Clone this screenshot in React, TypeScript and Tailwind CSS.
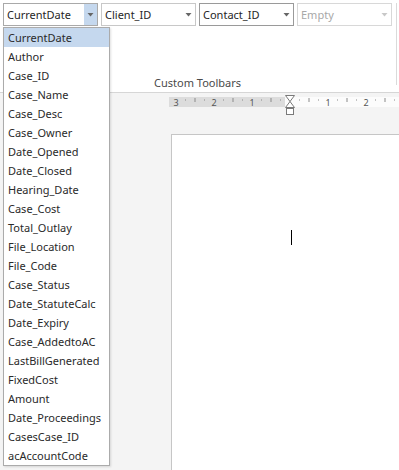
import React from 'react';

const fields = [
  'CurrentDate',
  'Author',
  'Case_ID',
  'Case_Name',
  'Case_Desc',
  'Case_Owner',
  'Date_Opened',
  'Date_Closed',
  'Hearing_Date',
  'Case_Cost',
  'Total_Outlay',
  'File_Location',
  'File_Code',
  'Case_Status',
  'Date_StatuteCalc',
  'Date_Expiry',
  'Case_AddedtoAC',
  'LastBillGenerated',
  'FixedCost',
  'Amount',
  'Date_Proceedings',
  'CasesCase_ID',
  'acAccountCode',
];

function Arrow({ color = '#555' }: { color?: string }) {
  return (
    <svg width="7" height="4" viewBox="0 0 7 4">
      <path d="M0.5 0h6L3.5 3.5z" fill={color} />
    </svg>
  );
}

function Combo({
  label,
  active,
  disabled,
  border,
}: {
  label: string;
  active?: boolean;
  disabled?: boolean;
  border: string;
}) {
  return (
    <div
      className="flex h-[23px] w-[95px] items-stretch border bg-white"
      style={{ borderColor: border }}
    >
      <span
        className={
          'flex-1 truncate pl-[3px] text-[11px] leading-[21px] ' +
          (disabled ? 'text-[#a8a8a8]' : 'text-[#262626]')
        }
      >
        {label}
      </span>
      <span
        className={
          'flex w-[13px] items-center justify-center ' + (active ? 'bg-[#c5d8ee]' : '')
        }
      >
        <Arrow color={disabled ? '#c8c8c8' : '#666'} />
      </span>
    </div>
  );
}

function Ruler() {
  const zero = 290;
  const unit = 38;
  const ticks: React.ReactNode[] = [];
  for (let u = -3; u <= 3; u++) {
    for (let q = 1; q < 4; q++) {
      const x = zero + u * unit + (q * unit) / 4 - 169;
      if (x < 0 || x > 230) continue;
      if (Math.abs(x - (zero - 169)) < 2) continue;
      ticks.push(
        q === 2 ? (
          <line key={`${u}-${q}`} x1={x} x2={x} y1={3} y2={7} stroke="#8a8a8a" />
        ) : (
          <rect key={`${u}-${q}`} x={x - 0.5} y={4.5} width={1} height={1} fill="#8a8a8a" />
        ),
      );
    }
  }
  const nums = [-3, -2, -1, 1, 2];
  return (
    <div className="relative ml-[169px] h-[18px] w-[230px]">
      <svg width="230" height="22" className="absolute left-0 top-[-2px]">
        <rect x="0" y="2" width="116" height="10" fill="#dcdcdc" />
        <rect x="116" y="2" width="114" height="10" fill="#fcfcfc" />
        {ticks}
        {nums.map((n) => (
          <text
            key={n}
            x={zero + n * unit - 169}
            y={10.5}
            textAnchor="middle"
            fontSize="9"
            fill="#555"
            fontFamily="'Noto Sans', sans-serif"
          >
            {Math.abs(n)}
          </text>
        ))}
        <path d="M116.5 0.5h9l-4.5 6z M116.5 12.5h9l-4.5 -6z" fill="#fff" stroke="#7a7a7a" />
        <rect x="117.5" y="13.5" width="7" height="6" fill="#fff" stroke="#7a7a7a" />
      </svg>
    </div>
  );
}

export default function App() {
  return (
    <div
      className="relative h-[470px] w-[399px] overflow-hidden bg-white"
      style={{ fontFamily: "'Noto Sans', 'Open Sans', sans-serif" }}
    >
      {/* Ribbon group */}
      <div className="flex h-[93px] flex-col border-b border-[#d6d6d6] bg-white">
        <div className="flex flex-1">
          <div className="flex flex-1 flex-col">
            <div className="flex gap-[3px] pl-[3px] pt-[3px]">
              <Combo label="CurrentDate" active border="#a9a9a9" />
              <Combo label="Client_ID" border="#c8c8c8" />
              <Combo label="Contact_ID" border="#9a9a9a" />
              <Combo label="Empty" disabled border="#d8d8d8" />
            </div>
            <div className="mt-auto pb-[1px] pl-[154px] text-[11px] leading-[16px] text-[#4a4a4a]">
              Custom Toolbars
            </div>
          </div>
          <div className="mr-[2px] mt-[3px] mb-[7px] w-px bg-[#dadada]" />
        </div>
      </div>

      {/* Document area */}
      <div className="flex h-[377px] flex-col bg-[#f4f4f4] pt-[4px]">
        <Ruler />
        <div className="ml-[171px] mt-[19px] flex-1 border-l border-t border-[#c6c6c6] bg-white">
          <div className="ml-[119px] mt-[95px] h-[15px] w-px bg-black" />
        </div>
      </div>

      {/* Open dropdown list */}
      <div className="absolute left-[3px] top-[27px] w-[107px] border border-[#ababab] bg-white shadow-[1px_1px_2px_rgba(0,0,0,0.12)]">
        {fields.map((f, i) => (
          <div
            key={f}
            className={
              'h-[19px] pl-[4px] text-[11px] leading-[19px] text-[#2a2a2a] ' +
              (i === 0 ? 'bg-[#c5d8ee]' : '')
            }
          >
            {f}
          </div>
        ))}
      </div>
    </div>
  );
}
